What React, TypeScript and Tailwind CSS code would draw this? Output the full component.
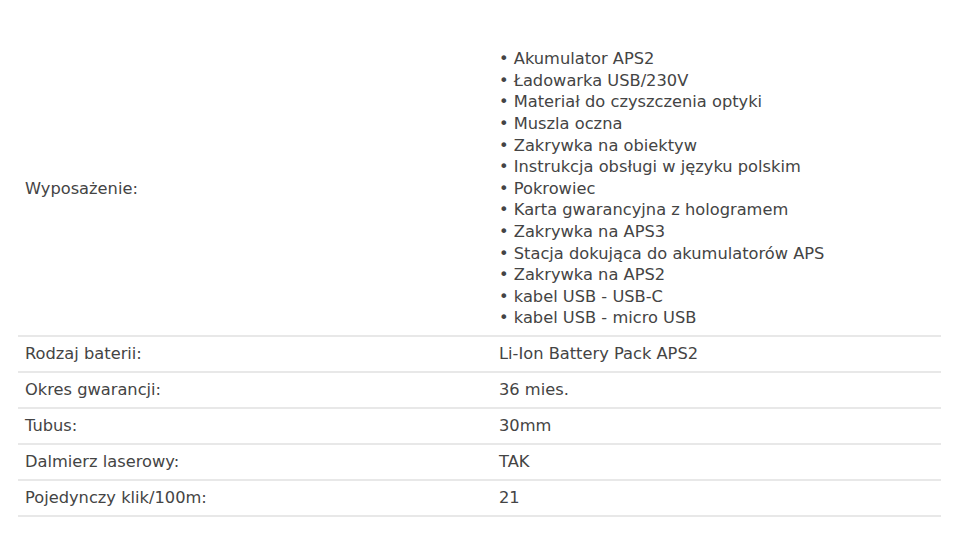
import React from 'react';

const equipment: string[] = [
  'Akumulator APS2',
  'Ładowarka USB/230V',
  'Materiał do czyszczenia optyki',
  'Muszla oczna',
  'Zakrywka na obiektyw',
  'Instrukcja obsługi w języku polskim',
  'Pokrowiec',
  'Karta gwarancyjna z hologramem',
  'Zakrywka na APS3',
  'Stacja dokująca do akumulatorów APS',
  'Zakrywka na APS2',
  'kabel USB - USB-C',
  'kabel USB - micro USB',
];

const rows: { label: string; value: string }[] = [
  { label: 'Rodzaj baterii:', value: 'Li-Ion Battery Pack APS2' },
  { label: 'Okres gwarancji:', value: '36 mies.' },
  { label: 'Tubus:', value: '30mm' },
  { label: 'Dalmierz laserowy:', value: 'TAK' },
  { label: 'Pojedynczy klik/100m:', value: '21' },
];

const App: React.FC = () => {
  return (
    <div className="w-[960px] h-[543px] bg-white overflow-hidden pt-[42px] font-['DejaVu_Sans',sans-serif] text-[16.25px] leading-[21.6px] text-[#444444]">
      <div className="ml-[18px] w-[923px]">
        <div className="grid grid-cols-[474px_1fr] border-b-2 border-[#e8e8e8]">
          <div className="flex items-center pl-[7px] py-[6.2px]">Wyposażenie:</div>
          <ul className="pl-[7px] py-[6.2px]">
            {equipment.map((item) => (
              <li key={item}>• {item}</li>
            ))}
          </ul>
        </div>
        {rows.map((row) => (
          <div key={row.label} className="grid grid-cols-[474px_1fr] border-b-2 border-[#e8e8e8]">
            <div className="pl-[7px] py-[6.2px]">{row.label}</div>
            <div className="pl-[7px] py-[6.2px]">{row.value}</div>
          </div>
        ))}
      </div>
    </div>
  );
};

export default App;
